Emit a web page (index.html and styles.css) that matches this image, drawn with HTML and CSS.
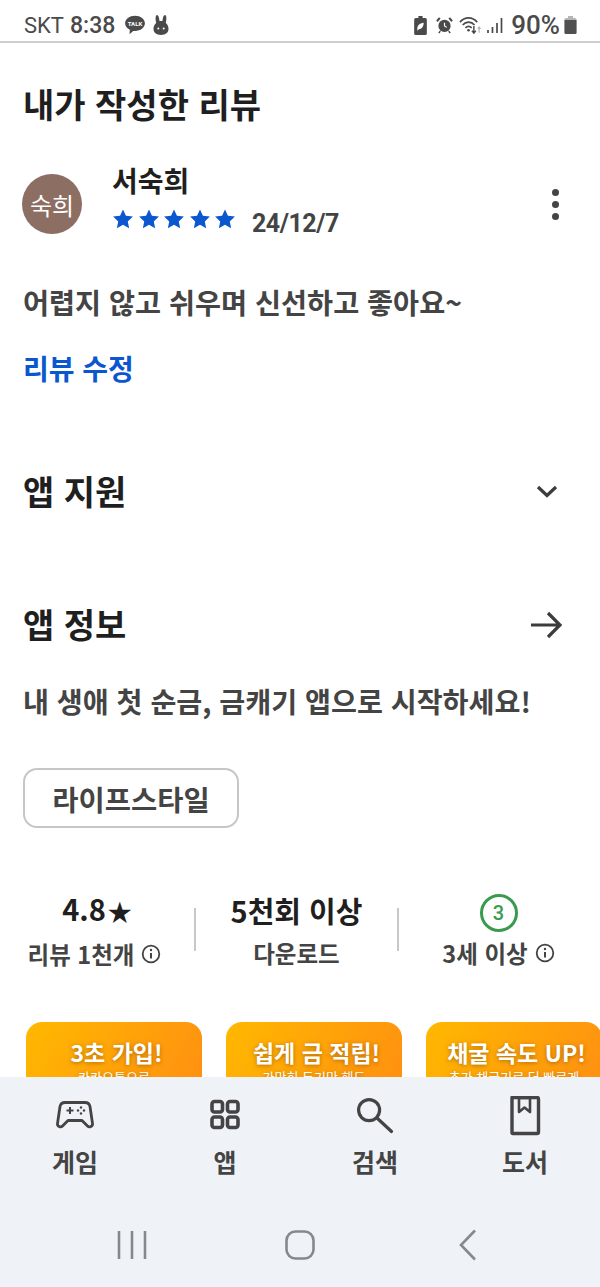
FILE: index.html
```html
<!DOCTYPE html>
<html lang="ko">
<head>
  <meta charset="UTF-8" />
  <title>내가 작성한 리뷰</title>
  <link rel="stylesheet" href="styles.css">
</head>
<body>
  <div class="phone">

    <!-- Status bar -->
    <div class="status-bar">
      <div class="status-left">
        <span class="carrier">SKT</span>
        <span class="clock">8:38</span>
        <svg class="talk-icon" width="22" height="22" viewBox="0 0 20 20">
          <path d="M10 1.500c5 0 9 3 9 7s-4 7-9 7c-.6 0-1.200 0-1.700-.1L5 18.500l.3-4.200C2.700 13 1 10.900 1 8.500c0-4 4-7 9-7z" fill="#4a4a4a"/>
          <text x="10" y="10.700" class="talk-text">TALK</text>
        </svg>
        <svg width="16" height="22" viewBox="0 0 16 22">
          <path d="M4 1c1.500 0 2.300 3 2.500 6h3C9.700 4 10.500 1 12 1c1.600 0 1.800 4 .8 8 1.600 1.300 2.700 3.200 2.700 5.800 0 4-3 6.200-7.500 6.200S.5 18.800.5 14.800c0-2.600 1.100-4.500 2.700-5.800C2.200 5 2.400 1 4 1z" fill="#4a4a4a"/>
          <circle cx="5.300" cy="14.500" r="1" fill="#fff"/>
          <circle cx="10.700" cy="14.500" r="1" fill="#fff"/>
        </svg>
      </div>
      <div class="status-right">
        <svg class="saver-icon" width="13" height="19" viewBox="0 0 12 18">
          <path d="M4 0h4v2h2.500q1.500 0 1.500 1.500v13q0 1.500-1.500 1.500h-9Q0 18 0 16.500v-13Q0 2 1.500 2H4z" fill="#4a4a4a"/>
          <path d="M3 12c0-3 2-5 6-5.500 0 4-2 6-4.500 6L3 14z" fill="#fff"/>
        </svg>
        <svg class="alarm-icon" width="17" height="18" viewBox="0 0 18 18">
          <circle cx="9" cy="10" r="6.500" fill="#4a4a4a"/>
          <path d="M9 6.500V10l2.500 1.500" fill="none" stroke="#fff" stroke-width="1.200"/>
          <path d="M1 5l3-3.500M17 5l-3-3.500" stroke="#4a4a4a" stroke-width="2.200"/>
          <path d="M4.500 15.500L3 17.500M13.500 15.500l1.500 2" stroke="#4a4a4a" stroke-width="1.600"/>
        </svg>
        <svg class="wifi-icon" width="23" height="20" viewBox="0 0 24 20">
          <path d="M1 7c5-6 13-6 18 0M3.800 10c3.500-4 9-4 12.400 0M6.700 13c2-2 4.600-2 6.600 0" fill="none" stroke="#4a4a4a" stroke-width="1.700"/>
          <circle cx="10" cy="15.500" r="1.400" fill="#4a4a4a"/>
          <path d="M15.500 11v7M13.500 16l2 2.500 2-2.500" fill="none" stroke="#4a4a4a" stroke-width="1.500"/>
          <path d="M21 18v-6M19.500 14l1.500-2 1.500 2" fill="none" stroke="#b5b5b5" stroke-width="1.200"/>
        </svg>
        <svg class="signal-icon" width="16" height="18" viewBox="0 0 16 18">
          <path d="M1 14v3M5.500 11v6M10 7v10M14.500 2v15" stroke="#4a4a4a" stroke-width="1.700"/>
        </svg>
        <span class="battery-text">90%</span>
        <svg class="battery-icon" width="13" height="18" viewBox="0 0 12 18">
          <path d="M3.500 0h5v2h-5z" fill="#b5b5b5"/>
          <path d="M1.500 2h9Q12 2 12 3.500v13q0 1.500-1.500 1.500h-9Q0 18 0 16.500v-13Q0 2 1.500 2z" fill="#b5b5b5"/>
          <path d="M0 4h12v12.500q0 1.500-1.500 1.500h-9Q0 18 0 16.500z" fill="#505050"/>
        </svg>
      </div>
    </div>

    <!-- Review -->
    <section class="review">
      <h1 class="page-title">내가 작성한 리뷰</h1>
      <div class="review-head">
        <div class="avatar">숙희</div>
        <div class="review-meta">
          <div class="review-name">서숙희</div>
          <div class="review-line">
            <span class="stars">
              <svg width="24" height="22" viewBox="0 0 24 24"><path class="star" d="M12 1.500l3.200 7 7.600.9-5.600 5.200 1.500 7.500L12 18.300l-6.700 3.800 1.500-7.500L1.200 9.400l7.600-.9z"/></svg>
              <svg width="24" height="22" viewBox="0 0 24 24"><path class="star" d="M12 1.500l3.200 7 7.600.9-5.600 5.200 1.500 7.500L12 18.300l-6.700 3.800 1.500-7.500L1.200 9.400l7.600-.9z"/></svg>
              <svg width="24" height="22" viewBox="0 0 24 24"><path class="star" d="M12 1.500l3.200 7 7.600.9-5.600 5.200 1.500 7.500L12 18.300l-6.700 3.800 1.500-7.500L1.200 9.400l7.600-.9z"/></svg>
              <svg width="24" height="22" viewBox="0 0 24 24"><path class="star" d="M12 1.500l3.200 7 7.600.9-5.600 5.200 1.500 7.500L12 18.300l-6.700 3.800 1.500-7.500L1.200 9.400l7.600-.9z"/></svg>
              <svg width="24" height="22" viewBox="0 0 24 24"><path class="star" d="M12 1.500l3.200 7 7.600.9-5.600 5.200 1.500 7.500L12 18.300l-6.700 3.800 1.500-7.500L1.200 9.400l7.600-.9z"/></svg>
            </span>
            <span class="review-date">24/12/7</span>
          </div>
        </div>
        <div class="more-btn"><i></i><i></i><i></i></div>
      </div>
      <p class="review-body">어렵지 않고 쉬우며 신선하고 좋아요~</p>
      <div class="review-edit">리뷰 수정</div>
    </section>

    <!-- App support -->
    <div class="section-row support-row">
      <h2>앱 지원</h2>
      <svg width="28" height="28" viewBox="0 0 28 28"><path d="M5 10l9 8.500 9-8.500" fill="none" stroke="#3c3c3c" stroke-width="3.200"/></svg>
    </div>

    <!-- App info -->
    <div class="section-row info-row">
      <h2>앱 정보</h2>
      <svg width="34" height="34" viewBox="0 0 34 34"><path d="M2 18h29M19 6l12 12-12 12" fill="none" stroke="#3c3c3c" stroke-width="3.200"/></svg>
    </div>
    <p class="app-desc">내 생애 첫 순금, 금캐기 앱으로 시작하세요!</p>
    <div class="category-chip">라이프스타일</div>

    <!-- Stats -->
    <div class="stats">
      <div class="stat">
        <div class="stat-top">4.8<span class="stat-star">★</span></div>
        <div class="stat-label">리뷰 1천개
          <svg class="info-icon" width="20" height="20" viewBox="0 0 20 20"><circle cx="10" cy="10" r="8.300" fill="none" stroke="#444" stroke-width="1.800"/><path d="M10 9v5.500" stroke="#444" stroke-width="2"/><circle cx="10" cy="6" r="1.200" fill="#444"/></svg>
        </div>
      </div>
      <div class="stat-sep"></div>
      <div class="stat">
        <div class="stat-top">5천회 이상</div>
        <div class="stat-label">다운로드</div>
      </div>
      <div class="stat-sep"></div>
      <div class="stat stat-age">
        <div class="age-badge">3</div>
        <div class="stat-label">3세 이상
          <svg class="info-icon" width="20" height="20" viewBox="0 0 20 20"><circle cx="10" cy="10" r="8.300" fill="none" stroke="#444" stroke-width="1.800"/><path d="M10 9v5.500" stroke="#444" stroke-width="2"/><circle cx="10" cy="6" r="1.200" fill="#444"/></svg>
        </div>
      </div>
    </div>

    <!-- Screenshots -->
    <div class="shots">
      <div class="shot"><b>3초 가입!</b><span>카카오톡으로</span></div>
      <div class="shot"><b>쉽게 금 적립!</b><span>가만히 두기만 해도</span></div>
      <div class="shot"><b>채굴 속도 UP!</b><span>추가 채굴기로 더 빠르게</span></div>
    </div>

    <!-- Bottom nav lies over the page -->
    <div class="bottom-area">
      <nav class="tabs">
        <div class="tab">
          <svg width="42" height="36" viewBox="0 0 42 36" fill="none" stroke="#444" stroke-width="2.800" stroke-linejoin="round">
            <path d="M11 4.500h20c3 0 4.500 1.500 5 4l2.500 17c.4 2.800-3 4.500-5 2.500L28 22.500H14L8.500 28c-2 2-5.400.3-5-2.500L6 8.500c.5-2.500 2-4 5-4z"/>
            <path d="M12.500 12.500h7M16 9v7" stroke-width="2"/>
            <circle cx="27" cy="9.500" r="1.200" fill="#444" stroke="none"/><circle cx="27" cy="15.500" r="1.200" fill="#444" stroke="none"/>
            <circle cx="24" cy="12.500" r="1.200" fill="#444" stroke="none"/><circle cx="30" cy="12.500" r="1.200" fill="#444" stroke="none"/>
          </svg>
          <span>게임</span>
        </div>
        <div class="tab">
          <svg width="42" height="36" viewBox="0 0 42 36" fill="none" stroke="#444" stroke-width="3.600">
            <rect x="8" y="3.500" width="10.500" height="10.500" rx="2.500"/><rect x="23.500" y="3.500" width="10.500" height="10.500" rx="2.500"/>
            <rect x="8" y="19" width="10.500" height="10.500" rx="2.500"/><rect x="23.500" y="19" width="10.500" height="10.500" rx="2.500"/>
          </svg>
          <span>앱</span>
        </div>
        <div class="tab">
          <svg width="42" height="36" viewBox="0 0 42 36" fill="none" stroke="#444" stroke-width="3.200" stroke-linecap="round">
            <circle cx="15.100" cy="12.100" r="10.500"/><path d="M23 20l14.500 13.500"/>
          </svg>
          <span>검색</span>
        </div>
        <div class="tab">
          <svg width="42" height="40" viewBox="0 0 42 40" fill="none" stroke="#444" stroke-width="3.400" stroke-linejoin="round">
            <path d="M8 1.500h25c.8 0 1.500.7 1.500 1.500v33c0 .8-.7 1.500-1.500 1.500H9c-.6 0-1-.4-1-1z"/>
            <path d="M15 2v14l5.500-4.500L26 16V2z" stroke-width="2.600"/>
          </svg>
          <span>도서</span>
        </div>
      </nav>
      <div class="sys-nav">
        <svg width="30" height="30" viewBox="0 0 30 30"><path d="M2 1v28M15 1v28M28 1v28" stroke="#85898f" stroke-width="2.600"/></svg>
        <svg width="30" height="30" viewBox="0 0 30 30"><rect x="1.500" y="1.500" width="27" height="27" rx="9" fill="none" stroke="#85898f" stroke-width="2.600"/></svg>
        <svg width="20" height="32" viewBox="0 0 20 32"><path d="M17 1.500L3 16l14 14.500" fill="none" stroke="#85898f" stroke-width="2.600"/></svg>
      </div>
    </div>

  </div>
</body>
</html>
```

FILE: styles.css
```css
/* Page base */
* {
  box-sizing: border-box;
}

body {
  margin: 0;
  background: #fff;
  font-family: "Noto Sans CJK KR", "Noto Sans", sans-serif;
  color: #1f1f1f;
}

h1, h2, p {
  margin: 0;
}

.phone {
  position: relative;
  width: 600px;
  height: 1287px;
  overflow: hidden;
  background: #fff;
}

/* Status bar */
.status-bar {
  height: 43px;
  padding: 9px 23px 0 24px;
  display: flex;
  align-items: center;
  justify-content: space-between;
  border-bottom: 2px solid #cfcfcf;
  color: #4a4a4a;
}

.status-left,
.status-right {
  display: flex;
  align-items: center;
}

.carrier {
  font-family: "Roboto", sans-serif;
  font-size: 22px;
  margin-right: 6px;
}

.clock {
  font-family: "Roboto", sans-serif;
  font-size: 23px;
  font-weight: 500;
  margin-right: 9px;
}

.talk-icon {
  margin-right: 7px;
}

.talk-text {
  font-family: "Roboto", sans-serif;
  font-size: 5.500px;
  font-weight: 700;
  fill: #fff;
  text-anchor: middle;
}

.saver-icon {
  margin-right: 9px;
}

.alarm-icon {
  margin-right: 6px;
}

.wifi-icon {
  margin-right: 5px;
}

.signal-icon {
  margin-right: 8px;
}

.battery-text {
  font-family: "Roboto", sans-serif;
  font-size: 26px;
  font-weight: 500;
  margin-right: 4px;
}

/* Review block */
.review {
  padding: 0 23px;
}

.page-title {
  margin-top: 36px;
  font-size: 34px;
  line-height: 50px;
  font-weight: 700;
  color: #1f1f1f;
}

.review-head {
  margin-top: 32px;
  display: flex;
  align-items: center;
}

.avatar {
  width: 60px;
  height: 60px;
  margin-left: -1px;
  border-radius: 50%;
  background: #8d6e63;
  color: #fff;
  display: flex;
  align-items: center;
  justify-content: center;
  font-size: 24px;
  flex: none;
}

.review-meta {
  margin-left: 31px;
  flex: 1;
}

.review-name {
  font-size: 28px;
  line-height: 38px;
  font-weight: 700;
  margin-left: -1px;
  color: #1f1f1f;
}

.review-line {
  display: flex;
  align-items: center;
  height: 48px;
}

.stars {
  display: flex;
  margin-top: -8px;
  margin-left: -2px;
  gap: 1.500px;
}

.star {
  fill: #0b57d0;
}

.review-date {
  margin-left: 15px;
  margin-top: 1px;
  font-family: "Roboto", sans-serif;
  font-size: 25px;
  font-weight: 700;
  letter-spacing: -0.5px;
  color: #444;
}

.more-btn {
  display: flex;
  flex-direction: column;
  gap: 5px;
  margin-right: 18px;
}

.more-btn i {
  display: block;
  width: 7px;
  height: 7px;
  border-radius: 50%;
  background: #444;
}

.review-body {
  margin-top: 35px;
  font-size: 28.300px;
  line-height: 40px;
  font-weight: 700;
  color: #444;
}

.review-edit {
  margin-top: 26px;
  font-size: 28px;
  line-height: 40px;
  font-weight: 700;
  color: #0b57d0;
}

/* Section rows */
.section-row {
  display: flex;
  align-items: center;
  justify-content: space-between;
  padding: 0 37px 0 23px;
}

.section-row h2 {
  font-size: 34px;
  line-height: 50px;
  font-weight: 700;
  color: #1f1f1f;
}

.support-row {
  margin-top: 78px;
  padding-right: 39px;
}

.info-row {
  margin-top: 83px;
  padding-right: 37px;
}

.app-desc {
  margin: 32px 23px 0;
  font-size: 28.200px;
  line-height: 40px;
  font-weight: 700;
  white-space: nowrap;
  color: #444;
}

/* Category chip */
.category-chip {
  margin: 47px 0 0 23px;
  width: 216px;
  height: 60px;
  border: 2px solid #c4c7c5;
  border-radius: 14px;
  display: flex;
  align-items: center;
  justify-content: center;
  font-size: 28.500px;
  font-weight: 700;
  color: #444;
}

/* Stats row */
.stats {
  margin-top: 57px;
  display: grid;
  grid-template-columns: 194px 2px 201px 2px 199px;
  align-items: center;
}

.stat {
  text-align: center;
}

.stat-top {
  font-size: 29px;
  line-height: 46px;
  font-weight: 700;
  color: #1f1f1f;
}

.stat-star {
  font-size: 24px;
  margin-left: 2px;
}

.stat-label {
  font-size: 23.500px;
  line-height: 40px;
  font-weight: 700;
  color: #444;
  display: flex;
  align-items: center;
  justify-content: center;
  gap: 7px;
}

.stat:first-child .stat-label {
  margin-right: 5px;
}

.stat-sep {
  width: 2px;
  height: 43px;
  background: #c8c8c8;
}

.stat-age {
  margin-top: 7px;
}

.age-badge {
  width: 38px;
  height: 38px;
  margin: 0 auto 1px;
  border: 3px solid #3a9b4f;
  border-radius: 50%;
  color: #3a9b4f;
  font-family: "Roboto", sans-serif;
  font-size: 20px;
  font-weight: 500;
  display: flex;
  align-items: center;
  justify-content: center;
}

/* Screenshot strip */
.shots {
  margin: 48px 0 0 26px;
  display: flex;
  gap: 24px;
}

.shot {
  width: 176px;
  height: 120px;
  flex: none;
  border-radius: 16px;
  padding-top: 13px;
  background: linear-gradient(120deg, #ffb800, #ff8a14);
  color: #fff;
  text-align: center;
  text-shadow: 0 1px 4px rgba(120, 70, 0, 0.6);
}

.shot b {
  display: block;
  padding-left: 5px;
  font-size: 23px;
  line-height: 34px;
  font-weight: 700;
}

.shot span {
  display: block;
  font-size: 13px;
  line-height: 16px;
}

/* Bottom navigation */
.bottom-area {
  position: absolute;
  left: 0;
  right: 0;
  bottom: 0;
  height: 210px;
  background: #eff2f7;
}

.tabs {
  display: grid;
  grid-template-columns: repeat(4, 150px);
  padding-top: 19px;
  height: 136px;
}

.tab {
  display: flex;
  flex-direction: column;
  align-items: center;
  color: #444;
}

.tab svg {
  height: 40px;
}

.tab span {
  margin-top: 7px;
  font-size: 25px;
  line-height: 36px;
  font-weight: 700;
}

.sys-nav {
  display: grid;
  grid-template-columns: repeat(3, 168px);
  padding: 16px 0 0 48px;
  justify-items: center;
  align-items: center;
}
```
